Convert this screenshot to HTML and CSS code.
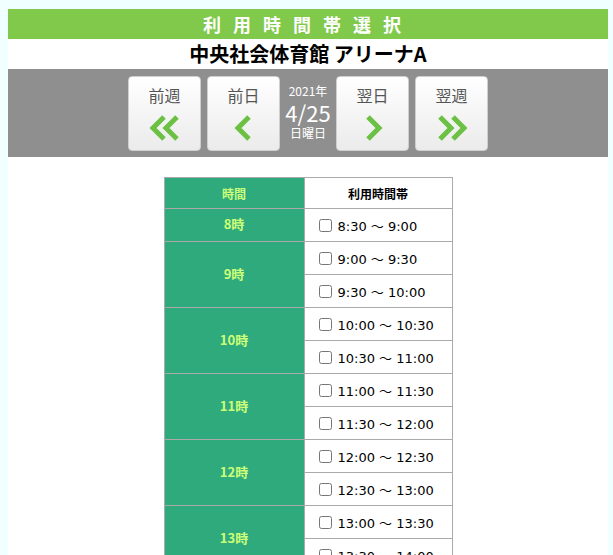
FILE: index.html
```html
<!DOCTYPE html>
<html lang="ja">
<head>
<meta charset="utf-8">
<link rel="stylesheet" href="styles.css">
</head>
<body>
<div class="page">
  <div class="head">利用時間帯選択</div>
  <div class="title">中央社会体育館 アリーナA</div>
  <div class="nav">
    <div class="btn">
      <span class="btn-label">前週</span>
      <svg class="chev" width="34" height="28" viewBox="0 0 34 28"><polyline points="16,3 5,14 16,25" /><polyline points="29,3 18,14 29,25" /></svg>
    </div>
    <div class="btn">
      <span class="btn-label">前日</span>
      <svg class="chev" width="34" height="28" viewBox="0 0 34 28"><polyline points="22,3 11,14 22,25" /></svg>
    </div>
    <div class="date">
      <span class="year">2021年</span>
      <span class="md">4/25</span>
      <span class="dow">日曜日</span>
    </div>
    <div class="btn">
      <span class="btn-label">翌日</span>
      <svg class="chev" width="34" height="28" viewBox="0 0 34 28"><polyline points="12,3 23,14 12,25" /></svg>
    </div>
    <div class="btn">
      <span class="btn-label">翌週</span>
      <svg class="chev" width="34" height="28" viewBox="0 0 34 28"><polyline points="5,3 16,14 5,25" /><polyline points="18,3 29,14 18,25" /></svg>
    </div>
  </div>
  <table class="slots">
    <tr class="hdr"><th class="hour">時間</th><th class="band">利用時間帯</th></tr>
    <tr><th class="hour">8時</th><td><label><input type="checkbox"> 8:30 ～ 9:00</label></td></tr>
    <tr><th class="hour" rowspan="2">9時</th><td><label><input type="checkbox"> 9:00 ～ 9:30</label></td></tr>
    <tr><td><label><input type="checkbox"> 9:30 ～ 10:00</label></td></tr>
    <tr><th class="hour" rowspan="2">10時</th><td><label><input type="checkbox"> 10:00 ～ 10:30</label></td></tr>
    <tr><td><label><input type="checkbox"> 10:30 ～ 11:00</label></td></tr>
    <tr><th class="hour" rowspan="2">11時</th><td><label><input type="checkbox"> 11:00 ～ 11:30</label></td></tr>
    <tr><td><label><input type="checkbox"> 11:30 ～ 12:00</label></td></tr>
    <tr><th class="hour" rowspan="2">12時</th><td><label><input type="checkbox"> 12:00 ～ 12:30</label></td></tr>
    <tr><td><label><input type="checkbox"> 12:30 ～ 13:00</label></td></tr>
    <tr><th class="hour" rowspan="2">13時</th><td><label><input type="checkbox"> 13:00 ～ 13:30</label></td></tr>
    <tr><td><label><input type="checkbox"> 13:30 ～ 14:00</label></td></tr>
  </table>
</div>
</body>
</html>
```
FILE: styles.css
```css
html, body {
  margin: 0;
  padding: 0;
  background: #f0ffff;
}
body {
  padding: 9px 0 0 8px;
  font-family: "DejaVu Sans", "Noto Sans CJK JP", sans-serif;
  overflow: hidden;
}
.page {
  width: 600px;
  background: #fff;
  min-height: 700px;
}
.head {
  background: #80c94b;
  height: 30px;
  line-height: 30px;
  color: #fff;
  font-family: "Noto Sans CJK JP", sans-serif;
  font-weight: bold;
  font-size: 18px;
  letter-spacing: 12px;
  text-align: center;
}
.title {
  height: 30px;
  line-height: 30px;
  font-family: "Noto Sans CJK JP", sans-serif;
  font-weight: bold;
  font-size: 20px;
  text-align: center;
  color: #000;
}
.nav {
  background: #8f8f8f;
  height: 88px;
  display: flex;
  justify-content: center;
  align-items: center;
}
.btn {
  width: 73px;
  height: 75px;
  margin: 0 3px;
  border: 1px solid #cfcfcf;
  border-radius: 4px;
  background: linear-gradient(#ffffff, #ebebeb);
  display: flex;
  flex-direction: column;
  align-items: center;
  box-sizing: border-box;
}
.btn-label {
  margin-top: 7px;
  font-family: "Noto Sans CJK JP", sans-serif;
  font-size: 16px;
  line-height: 22px;
  color: #555;
}
.chev {
  margin-top: 8px;
}
.chev polyline {
  fill: none;
  stroke: #6cc145;
  stroke-width: 5;
  stroke-linecap: butt;
  stroke-linejoin: miter;
}
.date {
  width: 50px;
  display: flex;
  flex-direction: column;
  align-items: center;
  color: #fff;
  font-family: "Noto Sans CJK JP", sans-serif;
  margin-top: -2px;
}
.year {
  font-size: 12px;
  line-height: 18px;
}
.md {
  font-size: 22px;
  line-height: 24px;
}
.dow {
  font-size: 12px;
  line-height: 18px;
}
.slots {
  border-collapse: collapse;
  margin: 20px auto 0;
  width: 289px;
}
.slots th, .slots td {
  border: 1px solid #aaa;
  height: 33px;
  padding: 0;
  box-sizing: border-box;
}
.slots tr.hdr th {
  height: 31px;
}
.slots th.hour {
  background: #2faa7d;
  color: #ccff77;
  font-family: "Noto Sans CJK JP", sans-serif;
  font-size: 13px;
  font-weight: bold;
  width: 140px;
  text-align: center;
  padding-bottom: 3px;
}
.slots tr.hdr th.hour {
  font-size: 12px;
  padding-bottom: 0;
}
.slots th.band {
  background: #fff;
  color: #000;
  font-family: "Noto Sans CJK JP", sans-serif;
  font-size: 12px;
  font-weight: bold;
  text-align: center;
}
.slots td {
  font-size: 13px;
  color: #000;
  padding-left: 14px;
}
.slots td label {
  display: flex;
  align-items: center;
}
.slots input {
  margin: 0 6px 0 0;
  width: 13px;
  height: 13px;
}
```
